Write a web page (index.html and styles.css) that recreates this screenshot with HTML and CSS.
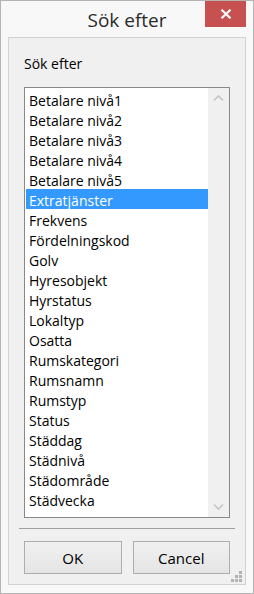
FILE: index.html
```html
<!DOCTYPE html>
<html>
<head>
<meta charset="utf-8">
<link rel="stylesheet" href="styles.css">
</head>
<body>

<div class="window">
  <div class="titlebar">
    <span></span>
    <span class="title">Sök efter</span>
    <button class="close" type="button" aria-label="Stäng">
      <svg width="12" height="10" viewBox="0 0 12 10">
        <path d="M1.5 0.8 L10.5 9.2 M10.5 0.8 L1.5 9.2" stroke="#fff" stroke-width="2.2" fill="none"/>
      </svg>
    </button>
  </div>

  <div class="client">
    <div class="label">Sök efter</div>

    <div class="listbox">
      <ul class="items">
        <li>Betalare nivå1</li>
        <li>Betalare nivå2</li>
        <li>Betalare nivå3</li>
        <li>Betalare nivå4</li>
        <li>Betalare nivå5</li>
        <li class="selected">Extratjänster</li>
        <li>Frekvens</li>
        <li>Fördelningskod</li>
        <li>Golv</li>
        <li>Hyresobjekt</li>
        <li>Hyrstatus</li>
        <li>Lokaltyp</li>
        <li>Osatta</li>
        <li>Rumskategori</li>
        <li>Rumsnamn</li>
        <li>Rumstyp</li>
        <li>Status</li>
        <li>Städdag</li>
        <li>Städnivå</li>
        <li>Städområde</li>
        <li>Städvecka</li>
      </ul>
      <div class="scrollbar">
        <svg width="21" height="21" viewBox="0 0 21 21">
          <path d="M6 12.5 L10.5 8 L15 12.5" stroke="#c4c4c4" stroke-width="1.6" fill="none"/>
        </svg>
        <svg width="21" height="21" viewBox="0 0 21 21">
          <path d="M6 8.5 L10.5 13 L15 8.5" stroke="#c4c4c4" stroke-width="1.6" fill="none"/>
        </svg>
      </div>
    </div>

    <div class="separator"></div>

    <div class="buttons">
      <button type="button" class="btn">OK</button>
      <button type="button" class="btn">Cancel</button>
    </div>

    <svg class="grip" width="12" height="12" viewBox="0 0 12 12">
      <rect x="8" y="0" width="3" height="3" fill="#b4b4b4"/>
      <rect x="4" y="4" width="3" height="3" fill="#b4b4b4"/>
      <rect x="8" y="4" width="3" height="3" fill="#b4b4b4"/>
      <rect x="0" y="8" width="3" height="3" fill="#b4b4b4"/>
      <rect x="4" y="8" width="3" height="3" fill="#b4b4b4"/>
      <rect x="8" y="8" width="3" height="3" fill="#b4b4b4"/>
    </svg>
  </div>
</div>

</body>
</html>
```

FILE: styles.css
```css
body {
  margin: 0;
  font-family: "Open Sans", "Noto Sans", sans-serif;
  color: #000;
}

.window {
  width: 254px;
  height: 594px;
  box-sizing: border-box;
  border: 1px solid #b4b4b4;
  background: #f8f8f8;
  padding: 0 7px 8px 7px;
  display: flex;
  flex-direction: column;
}

.titlebar {
  height: 36px;
  display: grid;
  grid-template-columns: 1fr auto 1fr;
  align-items: start;
}

.title {
  font-size: 19px;
  line-height: 36px;
  color: #2b2b2b;
  padding-top: 1px;
}

.close {
  justify-self: end;
  width: 41px;
  height: 26px;
  border: none;
  padding: 0;
  background: #c75050;
  display: flex;
  align-items: center;
  justify-content: center;
}

.client {
  position: relative;
  flex: 1;
  border: 1px solid #d2d2d2;
  background: #f0f0f0;
  display: flex;
  flex-direction: column;
}

.label {
  font-size: 14px;
  line-height: 20px;
  padding: 16px 15px 0 15px;
}

.listbox {
  margin: 13px 15px 0 15px;
  height: 431px;
  box-sizing: border-box;
  border: 1px solid #888;
  background: #fff;
  display: flex;
}

.items {
  list-style: none;
  margin: 0;
  padding: 1px 0 0 1px;
  flex: 1;
}

.items li {
  height: 20px;
  line-height: 23px;
  font-size: 14px;
  padding-left: 3px;
  white-space: nowrap;
}

.items li.selected {
  background: #3399ff;
  color: #fff;
}

.scrollbar {
  width: 21px;
  background: #f0f0f0;
  display: flex;
  flex-direction: column;
  justify-content: space-between;
}

.scrollbar svg {
  display: block;
}

.separator {
  margin: 10px 10px 0 10px;
  border-top: 1px solid #a0a0a0;
}

.buttons {
  display: flex;
  gap: 11px;
  margin: 12px 15px 0 15px;
}

.btn {
  flex: 1;
  height: 33px;
  border: 1px solid #adadad;
  background: linear-gradient(to bottom, #f0f0f0, #e5e5e5);
  font-family: "Open Sans", "Noto Sans", sans-serif;
  font-size: 15px;
  color: #000;
  padding: 0;
}

.grip {
  position: absolute;
  right: 2px;
  bottom: 1px;
}
```
